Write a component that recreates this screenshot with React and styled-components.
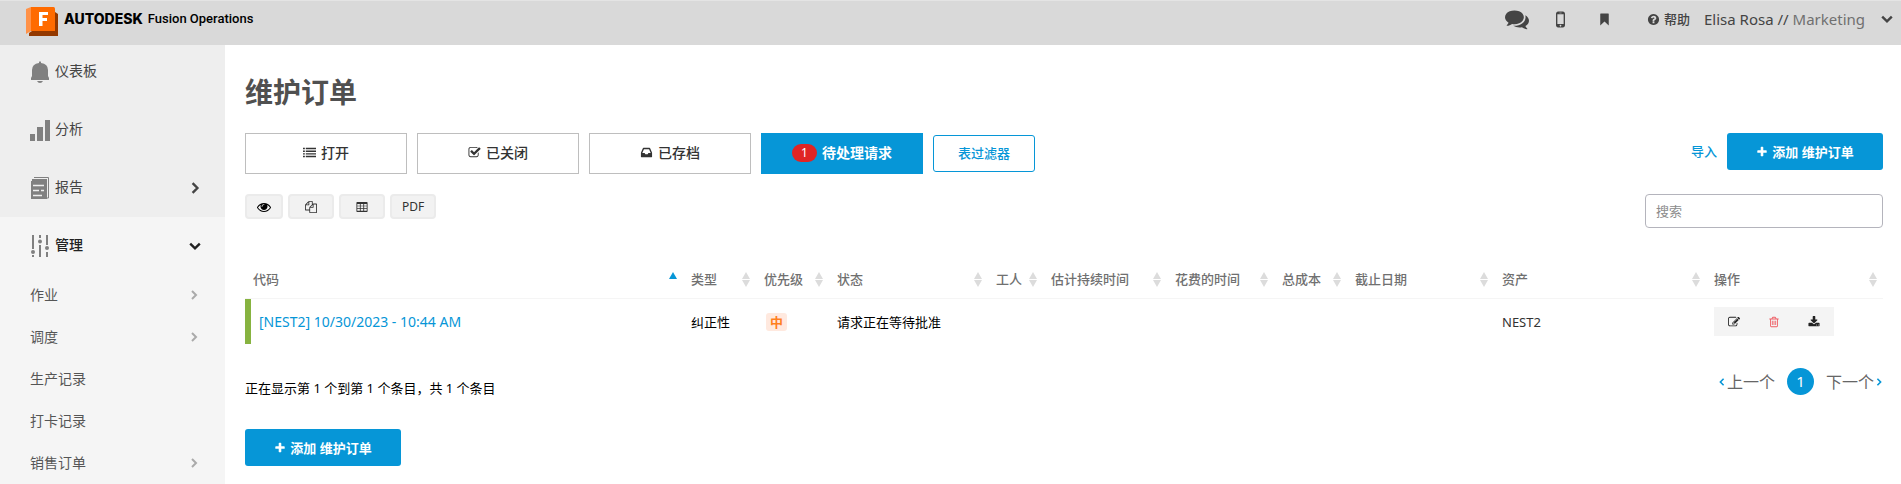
import React from "react";
import styled, { createGlobalStyle } from "styled-components";

const BLUE = "#0696d7";

const GlobalStyle = createGlobalStyle`
  *, *::before, *::after { box-sizing: border-box; }
  body {
    margin: 0;
    background: #fff;
    color: #000;
    font-family: "Noto Sans", "Noto Sans CJK SC", sans-serif;
    font-size: 13px;
    line-height: 20px;
  }
  button, input { font: inherit; color: inherit; margin: 0; }
  button { padding: 0; border: 0; background: none; cursor: pointer; }
  a { color: inherit; text-decoration: none; }
  svg { display: block; flex: none; }
`;

/* ---------- icons ---------- */

const glyphs = {
  plus: "M1600 736v192q0 40-28 68t-68 28h-416v416q0 40-28 68t-68 28h-192q-40 0-68-28t-28-68v-416h-416q-40 0-68-28t-28-68v-192q0-40 28-68t68-28h416v-416q0-40 28-68t68-28h192q40 0 68 28t28 68v416h416q40 0 68 28t28 68z",
  eye: "M1664 960q-152-236-381-353 61 104 61 225 0 185-131.5 316.5t-316.5 131.5-316.5-131.5-131.5-316.5q0-121 61-225-229 117-381 353 133 205 333.5 326.5t434.5 121.5 434.5-121.5 333.5-326.5zm-720-384q0-20-14-34t-34-14q-125 0-214.5 89.5t-89.5 214.5q0 20 14 34t34 14 34-14 14-34q0-86 61-147t147-61q20 0 34-14t14-34zm848 384q0 34-20 69-140 230-376.5 368.5t-499.5 138.5-499.5-139-376.5-368q-20-35-20-69t20-69q140-229 376.5-368t499.5-139 499.5 139 376.5 368q20 35 20 69z",
  inbox: "M1151 960h316q-1-3-2.5-8t-2.5-8l-212-496h-708l-212 496q-1 2-2.5 8t-2.5 8h316l95 192h320zm513 30v482q0 26-19 45t-45 19h-1408q-26 0-45-19t-19-45v-482q0-62 25-123l238-552q10-25 36.5-42t52.5-17h832q26 0 52.5 17t36.5 42l238 552q25 61 25 123z",
  check: "M1472 930v318q0 119-84.5 203.5t-203.5 84.5h-832q-119 0-203.5-84.5t-84.5-203.5v-832q0-119 84.5-203.5t203.5-84.5h832q63 0 117 25 15 7 18 23 3 17-9 29l-49 49q-10 10-23 10-3 0-9-2-23-6-45-6h-832q-66 0-113 47t-47 113v832q0 66 47 113t113 47h832q66 0 113-47t47-113v-254q0-13 9-22l64-64q10-10 23-10 6 0 12 3 20 8 20 29zm231-489l-814 814q-24 24-57 24t-57-24l-430-430q-24-24-24-57t24-57l110-110q24-24 57-24t57 24l263 263 647-647q24-24 57-24t57 24l110 110q24 24 24 57t-24 57z",
  list: "M0 256h256v192H0zM384 256h1408v192H384zM0 620h256v192H0zM384 620h1408v192H384zM0 984h256v192H0zM384 984h1408v192H384zM0 1348h256v192H0zM384 1348h1408v192H384z",
  comments: "M1408 768q0 139-94 257t-256.5 186.5-353.5 68.5q-86 0-176-16-124 88-278 128-36 9-86 16h-3q-11 0-20.5-8t-11.5-21q-1-3-1-6.5t.5-6.5 2-6l2.5-5 3.5-5.5 4-5 4.5-5 4-4.5q5-6 23-25t26-29.5 22.5-29 25-38.5 20.5-44q-124-72-195-177t-71-224q0-139 94-257t256.5-186.5 353.5-68.5 353.5 68.5 256.5 186.5 94 257zm384 256q0 120-71 224.5t-195 176.5q10 24 20.5 44t25 38.5 22.5 29 26 29.5 23 25q1 1 4 4.5t4.5 5 4 5 3.5 5.5l2.5 5 2 6 .5 6.5-1 6.5q-3 14-13 22t-22 7q-50-7-86-16-154-40-278-128-90 16-176 16-271 0-472-132 58 4 88 4 161 0 309-45t264-129q125-92 192-212t67-254q0-77-23-152 129 71 204 178t75 230z",
  help: "M1024 1376v-192q0-14-9-23t-23-9h-192q-14 0-23 9t-9 23v192q0 14 9 23t23 9h192q14 0 23-9t9-23zm256-672q0-88-55.5-163t-138.5-116-170-41q-243 0-371 213-15 24 8 42l132 100q7 6 19 6 16 0 25-12 53-68 86-92 34-24 86-24 48 0 85.5 26t37.5 59q0 38-20 61t-68 45q-63 28-115.5 86.5t-52.5 125.5v36q0 14 9 23t23 9h192q14 0 23-9t9-23q0-19 21.5-49.5t54.5-49.5q32-18 49-28.5t46-35 44.5-48 28-60.5 12.5-81zm384 192q0 209-103 385.5t-279.5 279.5-385.5 103-385.5-103-279.5-279.5-103-385.5 103-385.5 279.5-279.5 385.5-103 385.5 103 279.5 279.5 103 385.5z",
  bookmark: "M448 192h896q60 0 60 60v1350l-508-470-508 470V252q0-60 60-60z",
  mobile: "M640 64h512q90 0 154 64t64 154v1228q0 90-64 154t-154 64H640q-90 0-154-64t-64-154V282q0-90 64-154t154-64zM566 340v1040h660V340zM896 1460a86 86 0 1 0 .1 0zM780 180v60h232v-60z",
  copy: "M1696 384q40 0 68 28t28 68v1216q0 40-28 68t-68 28h-960q-40 0-68-28t-28-68v-288h-544q-40 0-68-28t-28-68v-672q0-40 20-88t48-76l408-408q28-28 76-48t88-20h416q40 0 68 28t28 68v328q68-40 128-40h416zm-544 213l-299 299h299v-299zm-640-384l-299 299h299v-299zm196 647l316-316v-416h-384v416q0 40-28 68t-68 28h-416v640h512v-256q0-40 20-88t48-76zm956 804v-1152h-384v416q0 40-28 68t-68 28h-416v640h896z",
  table: "M160 160h1472q96 0 96 96v1280q0 96-96 96H160q-96 0-96-96V256q0-96 96-96zM192 448v256h384V448zM704 448v256h384V448zM1216 448v256h384V448zM192 800v256h384V800zM704 800v256h384V800zM1216 800v256h384V800zM192 1152v320h384v-320zM704 1152v320h384v-320zM1216 1152v320h384v-320z",
  edit: "M888 1184l116-116-152-152-116 116v56h96v96h56zm440-720q-16-16-33 1l-350 350q-17 17-1 33t33-1l350-350q17-17 1-33zm80 594v190q0 119-84.5 203.5t-203.5 84.5h-832q-119 0-203.5-84.5t-84.5-203.5v-832q0-119 84.5-203.5t203.5-84.5h832q63 0 117 25 15 7 18 23 3 17-9 29l-49 49q-14 14-32 8-23-6-45-6h-832q-66 0-113 47t-47 113v832q0 66 47 113t113 47h832q66 0 113-47t47-113v-126q0-13 9-22l64-64q15-15 35-7t20 29zm-96-738l288 288-672 672h-288v-288zm444 132l-92 92-288-288 92-92q28-28 68-28t68 28l152 152q28 28 28 68t-28 68z",
  trash: "M704 736v576q0 14-9 23t-23 9h-64q-14 0-23-9t-9-23v-576q0-14 9-23t23-9h64q14 0 23 9t9 23zm256 0v576q0 14-9 23t-23 9h-64q-14 0-23-9t-9-23v-576q0-14 9-23t23-9h64q14 0 23 9t9 23zm256 0v576q0 14-9 23t-23 9h-64q-14 0-23-9t-9-23v-576q0-14 9-23t23-9h64q14 0 23 9t9 23zm128 724v-948h-896v948q0 22 7 40.5t14.5 27 10.5 8.5h832q3 0 10.5-8.5t14.5-27 7-40.5zm-672-1076h448l-48-117q-7-9-17-11h-317q-10 2-17 11zm928 32v64q0 14-9 23t-23 9h-96v948q0 83-47 143.5t-113 60.5h-832q-66 0-113-58.5t-47-141.5v-952h-96q-14 0-23-9t-9-23v-64q0-14 9-23t23-9h309l70-167q15-37 54-63t79-26h320q40 0 79 26t54 63l70 167h309q14 0 23 9t9 23z",
  download: "M1344 1344q0-26-19-45t-45-19-45 19-19 45 19 45 45 19 45-19 19-45zm256 0q0-26-19-45t-45-19-45 19-19 45 19 45 45 19 45-19 19-45zm128-224v320q0 40-28 68t-68 28h-1472q-40 0-68-28t-28-68v-320q0-40 28-68t68-28h465l135 136q58 56 136 56t136-56l136-136h464q40 0 68 28t28 68zm-325-569q17 41-14 70l-448 448q-18 19-45 19t-45-19l-448-448q-31-29-14-70 17-39 59-39h256v-448q0-26 19-45t45-19h256q26 0 45 19t19 45v448h256q42 0 59 39z",
};

function Glyph({ name, size = 14 }) {
  return (
    <svg width={size} height={size} viewBox="0 0 1792 1792" fill="currentColor" fillRule={name === "table" || name === "mobile" ? "evenodd" : "nonzero"} aria-hidden="true">
      <path d={glyphs[name]} />
    </svg>
  );
}

const chevrons = { right: "M3 1l4 4-4 4", left: "M7 1L3 5l4 4", down: "M1 3l4 4 4-4" };

function Chevron({ dir, size = 10, weight = 2 }) {
  return (
    <svg width={size} height={size} viewBox="0 0 10 10" fill="none" stroke="currentColor" strokeWidth={weight} aria-hidden="true">
      <path d={chevrons[dir]} />
    </svg>
  );
}

function SortMark({ active }) {
  return (
    <svg width="8" height="16" viewBox="0 0 8 16" fill={active ? BLUE : "#dcdcdc"} aria-hidden="true">
      <path d={active ? "M4 1l4 7H0z" : "M4 1l4 7H0zM0 9h8l-4 7z"} />
    </svg>
  );
}

function FusionLogo() {
  return (
    <svg width="32" height="29" viewBox="0 0 32 29" role="img" aria-label="Fusion">
      <path d="M0 2l5-2v24l-5 3z" fill="#ff9248" />
      <path d="M3 26l3-2h23V5l3 2v22H3z" fill="#943900" />
      <path d="M5 0h22.500q1.500 0 1.500 1.500V24H5z" fill="#ff6b00" />
      <path d="M13 5h9v3h-5.500v3H21v3h-4.500v5H13z" fill="#fff" />
    </svg>
  );
}

function BellIcon() {
  return (
    <svg width="20" height="22" viewBox="0 0 20 22" fill="currentColor" aria-hidden="true">
      <path d="M9 1q1-1.500 2 0v1q7 1 7 7v6l1 2v2H1v-2l1-2V9q0-6 7-7zM7 20h6q-1 2-3 2t-3-2z" />
    </svg>
  );
}

function BarsIcon() {
  return (
    <svg width="20" height="22" viewBox="0 0 20 22" fill="currentColor" aria-hidden="true">
      <path d="M0 15h5v7H0zM7 8h6v14H7zM15 1h5v21h-5z" />
    </svg>
  );
}

function ReportIcon() {
  return (
    <svg width="20" height="22" viewBox="0 0 20 22" aria-hidden="true">
      <path d="M4 .5h14.500V21H16" fill="none" stroke="currentColor" />
      <path d="M2 2h15v20h-2V4H2z" fill="currentColor" />
      <path d="M1 4h14.500v18H1z" fill="currentColor" />
      <path d="M3 8.500h11M3 13.500h6M11 13.500h3M3 18.500h9" stroke="#eee" strokeWidth="1.500" />
    </svg>
  );
}

function SlidersIcon() {
  return (
    <svg width="20" height="22" viewBox="0 0 20 22" fill="currentColor" aria-hidden="true">
      <path d="M2 0h2v14H2zM2 20h2v2H2zM9 0h2v3H9zM9 10h2v12H9zM16 0h2v10h-2zM16 17h2v5h-2z" />
      <circle cx="3" cy="17" r="2" />
      <circle cx="10" cy="6.500" r="2" />
      <circle cx="17" cy="13" r="2" />
    </svg>
  );
}

/* ---------- top bar ---------- */

const TopBar = styled.header`
  display: flex;
  justify-content: space-between;
  height: 45px;
  padding: 0 8px 0 26px;
  background: #d9d9d9;
  border-top: 1px solid #e4e4e4;
  color: #444;
`;

const Brand = styled.a`
  display: flex;
  align-items: center;
  gap: 6px;
  height: 40px;
  color: #000;
`;

const BrandText = styled.span`
  display: flex;
  align-items: center;
  gap: 5px;
  height: 36px;
  align-self: flex-start;
  font: 500 13px/20px Roboto, sans-serif;
`;

const BrandName = styled.strong`
  font: 800 14px/20px Inter, sans-serif;
`;

const TopNav = styled.nav`
  display: flex;
  align-items: center;
  height: 36px;
`;

const IconButton = styled.button`
  display: flex;
  justify-content: center;
  align-items: center;
  width: 44px;
  height: 36px;
`;

const HelpLink = styled.a`
  display: flex;
  align-items: center;
  gap: 4px;
  margin: 0 14px 0 20px;
  font-weight: 500;
`;

const UserButton = styled.button`
  display: flex;
  align-items: center;
  gap: 16px;
  font-size: 15px;
`;

const Muted = styled.span`
  color: #707070;
`;

/* ---------- sidebar ---------- */

const Shell = styled.div`
  display: grid;
  grid-template-columns: 225px minmax(0, 1fr);
  min-height: calc(100vh - 45px);
`;

const Sidebar = styled.nav`
  background: #f5f5f5;
  color: #444;
  font-size: 14px;
`;

const Section = styled.div`
  display: grid;
  gap: 18px;
  padding: ${(p) => (p.$open ? "9px 0 8px" : "7px 0 9px")};
  background: ${(p) => (p.$open ? "#f5f5f5" : "#eee")};
`;

const NavItem = styled.a`
  display: flex;
  align-items: center;
  gap: 5px;
  height: 40px;
  padding: 0 24px 0 30px;
  color: ${(p) => (p.$active ? "#222" : "#444")};
  font-weight: ${(p) => (p.$active ? 500 : 400)};
`;

const NavIcon = styled.span`
  color: #808080;
`;

const NavLabel = styled.span`
  flex: 1;
  padding-bottom: 3px;
`;

const SubItem = styled.a`
  display: flex;
  justify-content: space-between;
  align-items: center;
  height: 42px;
  padding: 0 26px 0 30px;
  color: #555;
`;

const SubArrow = styled.span`
  color: #aaa;
`;

/* ---------- main ---------- */

const Main = styled.main`
  padding: 28px 18px 18px 20px;
`;

const Title = styled.h1`
  margin: 0;
  color: #505050;
  font-size: 28px;
  line-height: 38px;
  font-weight: 700;
`;

const Bar = styled.div`
  display: flex;
  justify-content: space-between;
  align-items: flex-start;
  margin-top: ${(p) => p.$top}px;
`;

const Group = styled.div`
  display: flex;
  align-items: center;
  gap: ${(p) => p.$gap}px;
`;

const TabButton = styled.button`
  display: flex;
  justify-content: center;
  align-items: center;
  gap: 5px;
  width: 162px;
  height: 41px;
  padding-bottom: 2px;
  border: 1px solid ${(p) => (p.$active ? BLUE : "#bebebe")};
  background: ${(p) => (p.$active ? BLUE : "#fff")};
  color: ${(p) => (p.$active ? "#fff" : "#333")};
  font-size: 14px;
  font-weight: ${(p) => (p.$active ? 700 : 500)};
`;

const Count = styled.span`
  width: 25px;
  height: 18px;
  border-radius: 9px;
  background: #e02424;
  font-size: 12px;
  line-height: 18px;
  font-weight: 400;
`;

const FilterButton = styled.button`
  width: 102px;
  height: 37px;
  padding-bottom: 2px;
  border: 1px solid ${BLUE};
  border-radius: 3px;
  color: ${BLUE};
  font-weight: 500;
`;

const TextLink = styled.a`
  padding-bottom: 2px;
  color: ${BLUE};
  font-weight: 500;
`;

const PrimaryButton = styled.button`
  display: flex;
  justify-content: center;
  align-items: center;
  gap: 4px;
  width: 156px;
  height: 37px;
  border-radius: 3px;
  background: ${BLUE};
  color: #fff;
  font-weight: 700;
`;

const ToolButton = styled.button`
  display: flex;
  justify-content: center;
  align-items: center;
  width: ${(p) => (p.$small ? 38 : 46)}px;
  height: 25px;
  border: 2px solid #ebebeb;
  border-radius: 4px;
  background: #f2f2f2;
  color: ${(p) => (p.$small ? "#000" : "#333")};
  font-size: 12px;
`;

const SearchInput = styled.input`
  width: 238px;
  height: 34px;
  padding: 0 10px;
  border: 1px solid #b4b4bc;
  border-radius: 4px;
  background: #fff;
  &::placeholder { color: #8c8c8c; opacity: 1; }
`;

const Table = styled.table`
  width: 100%;
  margin-top: 30px;
  table-layout: fixed;
  border-collapse: separate;
  border-spacing: 0;
`;

const Column = styled.col`
  width: ${(p) => p.$width};
`;

const HeadCell = styled.th`
  height: 41px;
  padding: 2px 6px 0 8px;
  border-bottom: 1px solid #f5f5f5;
  color: #707070;
  font-weight: 500;
`;

const SortButton = styled.button`
  display: flex;
  justify-content: space-between;
  align-items: center;
  width: 100%;
  white-space: nowrap;
`;

const Cell = styled.td`
  height: 45px;
  padding: 0 8px;
  white-space: nowrap;
`;

const CodeCell = styled(Cell)`
  border-left: 6px solid #87b340;
  color: ${BLUE};
  font-size: 14px;
`;

const AssetCell = styled(Cell)`
  color: #333;
`;

const Priority = styled.span`
  display: block;
  width: 21px;
  margin-left: 2px;
  border-radius: 3px;
  background: #ffe9df;
  color: #ff7f1f;
  font-weight: 700;
  line-height: 18px;
  text-align: center;
`;

const Actions = styled.div`
  display: flex;
  width: 120px;
  height: 29px;
  background: #f4f4f4;
`;

const ActionButton = styled.button`
  display: flex;
  flex: 1;
  justify-content: center;
  align-items: center;
  color: ${(p) => (p.$danger ? "#ee5b62" : "#222")};
`;

const Footer = styled.div`
  display: flex;
  justify-content: space-between;
  align-items: flex-start;
  height: 61px;
  margin-top: 24px;
`;

const Summary = styled.p`
  margin: 10px 0 0;
`;

const Pager = styled.nav`
  display: flex;
  align-items: center;
  gap: 12px;
  font-size: 16px;
`;

const PageLink = styled.a`
  display: flex;
  align-items: center;
  gap: 1px;
  color: #666;
  svg { color: ${BLUE}; }
`;

const CurrentPage = styled.a`
  width: 27px;
  height: 27px;
  border-radius: 50%;
  background: ${BLUE};
  color: #fff;
  font-size: 15px;
  line-height: 27px;
  text-align: center;
`;

const columns = [
  ["代码", "auto"],
  ["类型", "73px"],
  ["优先级", "73px"],
  ["状态", "159px"],
  ["工人", "55px"],
  ["估计持续时间", "124px"],
  ["花费的时间", "107px"],
  ["总成本", "73px"],
  ["截止日期", "147px"],
  ["资产", "212px"],
  ["操作", "177px"],
];

const navItems = [
  { label: "仪表板", Icon: BellIcon },
  { label: "分析", Icon: BarsIcon },
  { label: "报告", Icon: ReportIcon, arrow: true },
];

const subItems = [
  ["作业", true],
  ["调度", true],
  ["生产记录", false],
  ["打卡记录", false],
  ["销售订单", true],
];

function AddOrderButton() {
  return (
    <PrimaryButton type="button">
      <Glyph name="plus" size={12} />
      添加 维护订单
    </PrimaryButton>
  );
}

export default function App() {
  return (
    <>
      <GlobalStyle />
      <TopBar>
        <Brand href="#">
          <FusionLogo />
          <BrandText>
            <BrandName>AUTODESK</BrandName>
            Fusion Operations
          </BrandText>
        </Brand>
        <TopNav>
          <IconButton type="button" aria-label="消息"><Glyph name="comments" size={24} /></IconButton>
          <IconButton type="button" aria-label="移动设备"><Glyph name="mobile" size={17} /></IconButton>
          <IconButton type="button" aria-label="书签"><Glyph name="bookmark" size={15} /></IconButton>
          <HelpLink href="#"><Glyph name="help" size={13} />帮助</HelpLink>
          <UserButton type="button">
            <span>Elisa Rosa // <Muted>Marketing</Muted></span>
            <Chevron dir="down" size={12} />
          </UserButton>
        </TopNav>
      </TopBar>
      <Shell>
        <Sidebar>
          <Section>
            {navItems.map(({ label, Icon, arrow }) => (
              <NavItem href="#" key={label}>
                <NavIcon><Icon /></NavIcon>
                <NavLabel>{label}</NavLabel>
                {arrow && <Chevron dir="right" size={12} />}
              </NavItem>
            ))}
          </Section>
          <Section $open>
            <NavItem href="#" $active>
              <NavIcon><SlidersIcon /></NavIcon>
              <NavLabel>管理</NavLabel>
              <Chevron dir="down" size={12} />
            </NavItem>
          </Section>
          {subItems.map(([label, arrow]) => (
            <SubItem href="#" key={label}>
              {label}
              {arrow && <SubArrow><Chevron dir="right" /></SubArrow>}
            </SubItem>
          ))}
        </Sidebar>
        <Main>
          <Title>维护订单</Title>
          <Bar $top={22}>
            <Group $gap={10}>
              <TabButton type="button"><Glyph name="list" size={13} />打开</TabButton>
              <TabButton type="button"><Glyph name="check" size={13} />已关闭</TabButton>
              <TabButton type="button"><Glyph name="inbox" size={13} />已存档</TabButton>
              <TabButton type="button" $active><Count>1</Count>待处理请求</TabButton>
              <FilterButton type="button">表过滤器</FilterButton>
            </Group>
            <Group $gap={10}>
              <TextLink href="#">导入</TextLink>
              <AddOrderButton />
            </Group>
          </Bar>
          <Bar $top={20}>
            <Group $gap={5}>
              <ToolButton type="button" $small aria-label="显示"><Glyph name="eye" /></ToolButton>
              <ToolButton type="button" aria-label="复制"><Glyph name="copy" size={12} /></ToolButton>
              <ToolButton type="button" aria-label="表格"><Glyph name="table" size={12} /></ToolButton>
              <ToolButton type="button">PDF</ToolButton>
            </Group>
            <SearchInput type="search" aria-label="搜索" placeholder="搜索" />
          </Bar>
          <Table>
            <colgroup>
              {columns.map(([name, width]) => <Column key={name} $width={width} />)}
            </colgroup>
            <thead>
              <tr>
                {columns.map(([name], i) => (
                  <HeadCell key={name} scope="col" aria-sort={i === 0 ? "ascending" : "none"}>
                    <SortButton type="button">{name}<SortMark active={i === 0} /></SortButton>
                  </HeadCell>
                ))}
              </tr>
            </thead>
            <tbody>
              <tr>
                <CodeCell><a href="#">[NEST2] 10/30/2023 - 10:44 AM</a></CodeCell>
                <Cell>纠正性</Cell>
                <Cell><Priority>中</Priority></Cell>
                <Cell>请求正在等待批准</Cell>
                <Cell /><Cell /><Cell /><Cell /><Cell />
                <AssetCell>NEST2</AssetCell>
                <Cell>
                  <Actions>
                    <ActionButton type="button" aria-label="编辑"><Glyph name="edit" size={12} /></ActionButton>
                    <ActionButton type="button" aria-label="删除" $danger><Glyph name="trash" size={12} /></ActionButton>
                    <ActionButton type="button" aria-label="下载"><Glyph name="download" size={12} /></ActionButton>
                  </Actions>
                </Cell>
              </tr>
            </tbody>
          </Table>
          <Footer>
            <Summary>正在显示第 1 个到第 1 个条目，共 1 个条目</Summary>
            <Pager aria-label="分页">
              <PageLink href="#"><Chevron dir="left" size={8} />上一个</PageLink>
              <CurrentPage href="#" aria-current="page">1</CurrentPage>
              <PageLink href="#">下一个<Chevron dir="right" size={8} /></PageLink>
            </Pager>
          </Footer>
          <AddOrderButton />
        </Main>
      </Shell>
    </>
  );
}
